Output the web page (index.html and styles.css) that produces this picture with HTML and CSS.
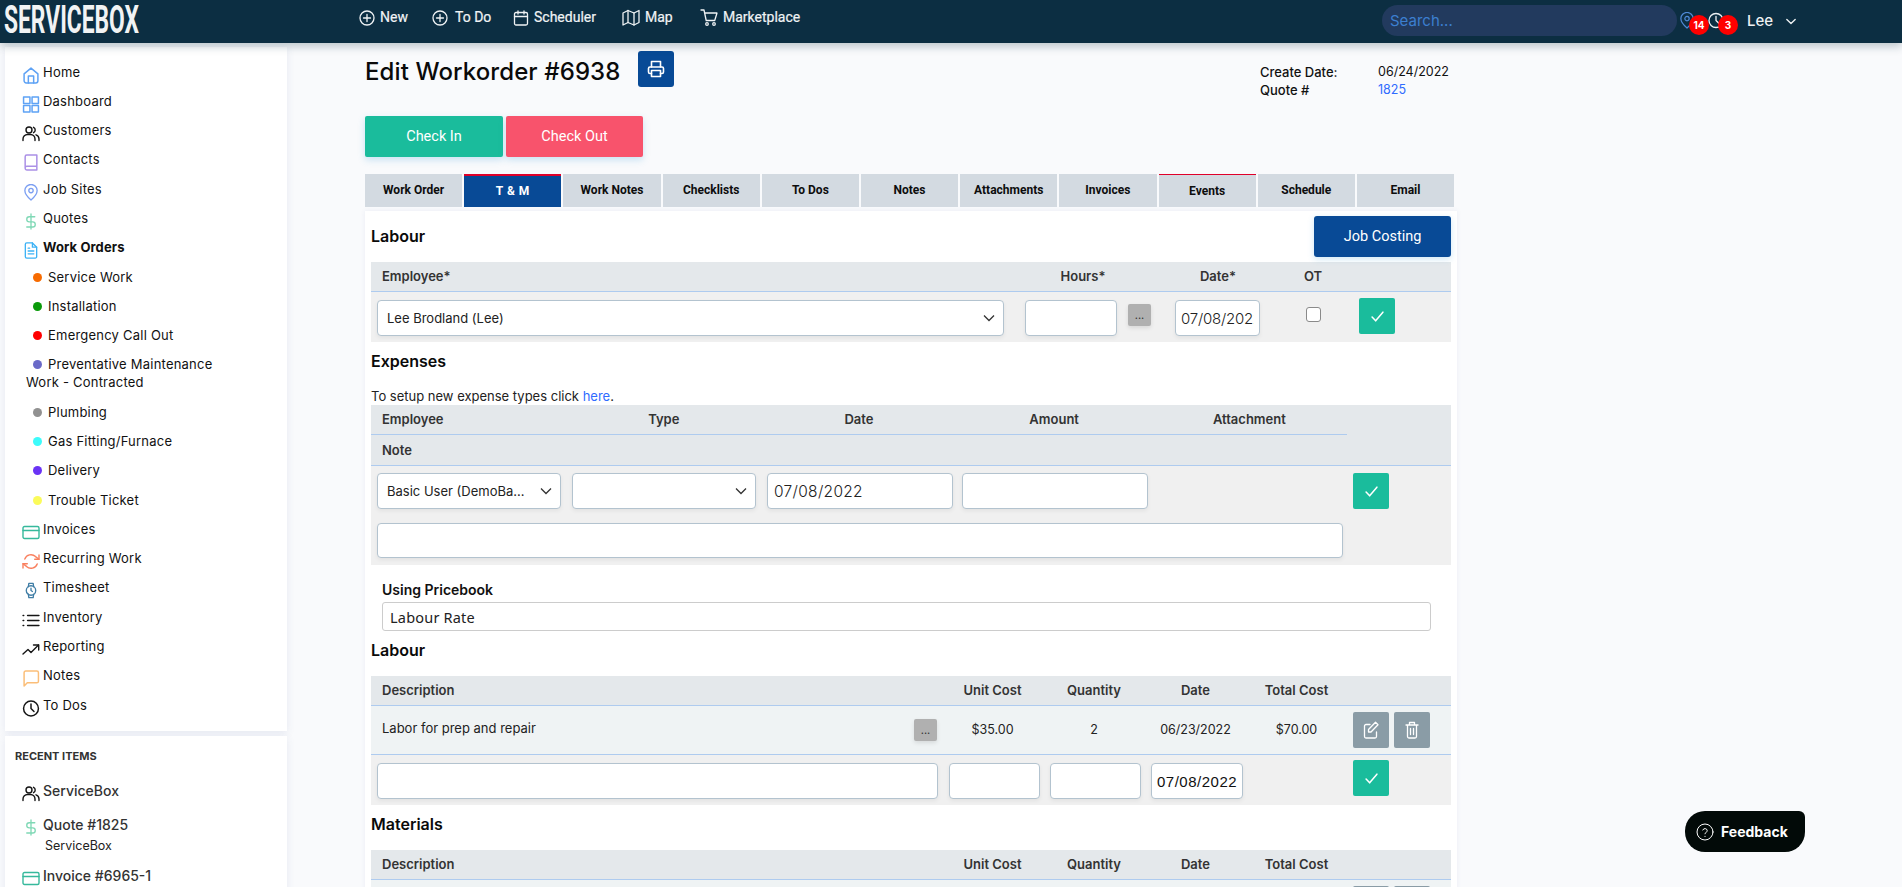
FILE: index.html
```html
<!DOCTYPE html>
<html lang="en">
<head>
<meta charset="utf-8">
<title>Edit Workorder #6938</title>
<link rel="stylesheet" href="styles.css">
</head>
<body>
<svg class="defs" width="0" height="0" aria-hidden="true">
  <symbol id="i-home" viewBox="0 0 16 16"><path d="M1.500 6.500 8 1l6.500 5.500V13a2 2 0 0 1-2 2h-9a2 2 0 0 1-2-2z"/><path d="M5.500 15V8.500h5V15"/></symbol>
  <symbol id="i-grid" viewBox="0 0 16 16"><rect x="1" y="1" width="6" height="6"/><rect x="9" y="1" width="6" height="6"/><rect x="1" y="9" width="6" height="6"/><rect x="9" y="9" width="6" height="6"/></symbol>
  <symbol id="i-users" viewBox="0 0 18 16"><circle cx="7" cy="4.500" r="3"/><path d="M1 15v-1.500A4.500 4.500 0 0 1 5.500 9h3a4.500 4.500 0 0 1 4.500 4.500V15"/><path d="M11.500 1.800a3 3 0 0 1 0 5.400M14 9.300a4.500 4.500 0 0 1 3 4.200V15"/></symbol>
  <symbol id="i-book" viewBox="0 0 16 16"><path d="M2.500 13V2.500A1.500 1.500 0 0 1 4 1h9.500v14H4a1.500 1.500 0 0 1-1.500-1.500V13A1.500 1.500 0 0 1 4 11.500h9.500"/></symbol>
  <symbol id="i-pin" viewBox="0 0 16 18"><path d="M8 17s6.500-5.500 6.500-10A6.500 6.500 0 0 0 1.500 7C1.500 11.500 8 17 8 17z"/><circle cx="8" cy="7" r="2.300"/></symbol>
  <symbol id="i-dollar" viewBox="0 0 12 18"><path d="M6 1v16M10 4H4.200a2.700 2.700 0 0 0 0 5.400h3.600a2.700 2.700 0 0 1 0 5.400H1.500"/></symbol>
  <symbol id="i-file" viewBox="0 0 16 18"><path d="M9.500 1H3.500A1.500 1.500 0 0 0 2 2.500v13A1.500 1.500 0 0 0 3.500 17h9a1.500 1.500 0 0 0 1.500-1.500V5.500z"/><path d="M9.500 1v4.500H14M5 9.500h6M5 12.500h6M5 6.500h1.500"/></symbol>
  <symbol id="i-card" viewBox="0 0 18 14"><rect x="1" y="1" width="16" height="12" rx="1.500"/><path d="M1 5h16"/></symbol>
  <symbol id="i-refresh" viewBox="0 0 18 16"><path d="M17 1.500v4.300h-4.300M1 14.500v-4.300h4.300"/><path d="M2.800 5.500a6.500 6.500 0 0 1 10.700-2.400L17 5.800M1 10.200l3.500 2.700a6.500 6.500 0 0 0 10.700-2.400"/></symbol>
  <symbol id="i-watch" viewBox="0 0 14 18"><circle cx="7" cy="9" r="5"/><path d="M7 6.500V9l1.500 1M4.200 5l.5-3.500h4.600l.5 3.500M4.200 13l.5 3.500h4.600l.5-3.500"/></symbol>
  <symbol id="i-list" viewBox="0 0 16 14"><path d="M5 2.500h10M5 7h10M5 11.500h10M1 2.500h.5M1 7h.5M1 11.500h.5"/></symbol>
  <symbol id="i-trend" viewBox="0 0 18 12"><path d="M1 10.500 6 6l3 3 7.500-7.500"/><path d="M11.500 1.500h5.200v5"/></symbol>
  <symbol id="i-chat" viewBox="0 0 16 16"><path d="M15 10.500A1.500 1.500 0 0 1 13.500 12H4.500L1.500 15V2.500A1.500 1.500 0 0 1 3 1h10.500A1.500 1.500 0 0 1 15 2.500z"/></symbol>
  <symbol id="i-clock" viewBox="0 0 16 16"><circle cx="8" cy="8" r="7"/><path d="M8 3.800V8l2.800 2.800"/></symbol>
  <symbol id="i-plus" viewBox="0 0 16 16"><circle cx="8" cy="8" r="7"/><path d="M8 4.500v7M4.500 8h7"/></symbol>
  <symbol id="i-cal" viewBox="0 0 16 16"><rect x="1.500" y="2.500" width="13" height="12.500" rx="1.500"/><path d="M5 1v3M11 1v3M1.500 6.500h13"/></symbol>
  <symbol id="i-map" viewBox="0 0 18 16"><path d="M1 3.500v12l5-2.500 6 2.500 5-2.500V1l-5 2.500L6 1z"/><path d="M6 1v12M12 3.500v12"/></symbol>
  <symbol id="i-cart" viewBox="0 0 18 17"><path d="M1 1h3l2.200 10.500h8.500L17 4H4.700"/><circle cx="7" cy="15" r="1.300"/><circle cx="14" cy="15" r="1.300"/></symbol>
  <symbol id="i-check" viewBox="0 0 12 10"><path d="M1 5.500 4.300 9 11 1"/></symbol>
  <symbol id="i-printer" viewBox="0 0 18 18"><path d="M4.500 7V1.500h9V7"/><path d="M4.500 13.500H3A1.500 1.500 0 0 1 1.500 12V8.500A1.500 1.500 0 0 1 3 7h12a1.500 1.500 0 0 1 1.500 1.500V12a1.500 1.500 0 0 1-1.500 1.500h-1.500"/><path d="M4.500 10.500h9v6h-9z"/></symbol>
  <symbol id="i-edit" viewBox="0 0 16 18"><path d="M7 3.500H3A1.500 1.500 0 0 0 1.500 5v10.500A1.500 1.500 0 0 0 3 17h9a1.500 1.500 0 0 0 1.500-1.500V11"/><path d="M12.500 1.200 15 3.700 8 11H5.500V8.500z"/></symbol>
  <symbol id="i-trash" viewBox="0 0 14 18"><path d="M1 4h12M4.500 4V1.500h5V4M2.500 4v11.500A1.500 1.500 0 0 0 4 17h6a1.500 1.500 0 0 0 1.500-1.500V4M5.500 7.500v6M8.500 7.500v6"/></symbol>
  <symbol id="i-down" viewBox="0 0 12 8"><path d="M1 1.500 6 6.500l5-5"/></symbol>
</svg>

<header class="topbar">
  <div class="logo"><span class="logo-text">SERVICEBOX</span></div>
  <nav class="topnav">
    <a class="topnav-item"><svg class="topnav-icon"><use href="#i-plus"/></svg>New</a>
    <a class="topnav-item topnav-item--wide"><svg class="topnav-icon"><use href="#i-plus"/></svg>To Do</a>
    <a class="topnav-item"><svg class="topnav-icon"><use href="#i-cal"/></svg>Scheduler</a>
    <a class="topnav-item"><svg class="topnav-icon topnav-icon--big"><use href="#i-map"/></svg>Map</a>
    <a class="topnav-item"><svg class="topnav-icon topnav-icon--big"><use href="#i-cart"/></svg>Marketplace</a>
  </nav>
  <input class="search" type="text" placeholder="Search...">
  <div class="alerts">
    <div class="alert alert--pin"><svg class="alert-icon alert-icon--blue"><use href="#i-pin"/></svg><span class="badge">14</span></div>
    <div class="alert"><svg class="alert-icon"><use href="#i-clock"/></svg><span class="badge">3</span></div>
  </div>
  <div class="user">Lee<svg class="user-chevron"><use href="#i-down"/></svg></div>
</header>

<div class="layout">
  <aside class="sidebar">
    <div class="card card--nav">
      <a class="nav-item"><svg class="ico c-blue"><use href="#i-home"/></svg>Home</a>
      <a class="nav-item"><svg class="ico c-blue"><use href="#i-grid"/></svg>Dashboard</a>
      <a class="nav-item"><svg class="ico c-dark"><use href="#i-users"/></svg>Customers</a>
      <a class="nav-item"><svg class="ico c-purple"><use href="#i-book"/></svg>Contacts</a>
      <a class="nav-item"><svg class="ico c-periwinkle"><use href="#i-pin"/></svg>Job Sites</a>
      <a class="nav-item"><svg class="ico c-mint"><use href="#i-dollar"/></svg>Quotes</a>
      <a class="nav-item nav-item--active"><svg class="ico c-sky"><use href="#i-file"/></svg>Work Orders</a>
      <a class="sub-item"><i class="dot dot--orange"></i>Service Work</a>
      <a class="sub-item"><i class="dot dot--green"></i>Installation</a>
      <a class="sub-item"><i class="dot dot--red"></i>Emergency Call Out</a>
      <a class="sub-item"><i class="dot dot--indigo"></i>Preventative Maintenance Work - Contracted</a>
      <a class="sub-item"><i class="dot dot--grey"></i>Plumbing</a>
      <a class="sub-item"><i class="dot dot--cyan"></i>Gas Fitting/Furnace</a>
      <a class="sub-item"><i class="dot dot--violet"></i>Delivery</a>
      <a class="sub-item"><i class="dot dot--yellow"></i>Trouble Ticket</a>
      <a class="nav-item"><svg class="ico c-teal"><use href="#i-card"/></svg>Invoices</a>
      <a class="nav-item"><svg class="ico c-coral"><use href="#i-refresh"/></svg>Recurring Work</a>
      <a class="nav-item"><svg class="ico c-steel"><use href="#i-watch"/></svg>Timesheet</a>
      <a class="nav-item"><svg class="ico c-dark"><use href="#i-list"/></svg>Inventory</a>
      <a class="nav-item"><svg class="ico c-dark"><use href="#i-trend"/></svg>Reporting</a>
      <a class="nav-item"><svg class="ico c-amber"><use href="#i-chat"/></svg>Notes</a>
      <a class="nav-item"><svg class="ico c-dark"><use href="#i-clock"/></svg>To Dos</a>
    </div>
    <div class="card card--recent">
      <div class="recent-title">RECENT ITEMS</div>
      <a class="recent-item"><svg class="ico c-dark"><use href="#i-users"/></svg>ServiceBox</a>
      <a class="recent-item"><svg class="ico c-mint"><use href="#i-dollar"/></svg>Quote #1825</a>
      <div class="recent-sub">ServiceBox</div>
      <a class="recent-item"><svg class="ico c-teal"><use href="#i-card"/></svg>Invoice #6965-1</a>
    </div>
  </aside>

  <main class="main">
    <div class="page-head">
      <h1 class="page-title">Edit Workorder #6938</h1>
      <button class="btn-print" type="button"><svg class="print-icon"><use href="#i-printer"/></svg></button>
      <dl class="meta">
        <dt>Create Date:</dt><dd>06/24/2022</dd>
        <dt>Quote #</dt><dd><a class="link">1825</a></dd>
      </dl>
    </div>

    <div class="checks">
      <button class="btn-check btn-check--in" type="button">Check In</button>
      <button class="btn-check btn-check--out" type="button">Check Out</button>
    </div>

    <div class="tabs">
      <a class="tab">Work Order</a>
      <a class="tab tab--active">T &amp; M</a>
      <a class="tab">Work Notes</a>
      <a class="tab">Checklists</a>
      <a class="tab">To Dos</a>
      <a class="tab">Notes</a>
      <a class="tab">Attachments</a>
      <a class="tab">Invoices</a>
      <a class="tab tab--flag">Events</a>
      <a class="tab">Schedule</a>
      <a class="tab">Email</a>
    </div>

    <section class="panel">
      <div class="panel-top">
        <h2 class="section-title">Labour</h2>
        <button class="btn-costing" type="button">Job Costing</button>
      </div>

      <div class="grid-time thead">
        <div class="th th--left">Employee*</div>
        <div class="th">Hours*</div>
        <div class="th">Date*</div>
        <div class="th">OT</div>
        <div></div>
      </div>
      <div class="grid-time entry entry--time">
        <div><select class="field select select--employee"><option>Lee Brodland (Lee)</option></select></div>
        <div class="hours-cell"><input class="field field--hours" type="text"><button class="btn-dots" type="button">...</button></div>
        <div><input class="field field--date-sm" type="text" value="07/08/2022"></div>
        <div><input class="ot" type="checkbox"></div>
        <div><button class="btn-ok btn-ok--time" type="button"><svg class="ok-icon"><use href="#i-check"/></svg></button></div>
      </div>

      <h2 class="section-title">Expenses</h2>
      <p class="intro">To setup new expense types click <a class="link">here</a>.</p>
      <div class="exp-head">
        <div class="grid-exp exp-head-row">
          <div class="th th--left">Employee</div>
          <div class="th">Type</div>
          <div class="th">Date</div>
          <div class="th">Amount</div>
          <div class="th">Attachment</div>
        </div>
        <div class="th th--left exp-note">Note</div>
      </div>
      <div class="exp-entry">
        <div class="exp-fields">
          <div class="exp-line">
            <select class="field select select--basic"><option>Basic User (DemoBasicUser)</option></select>
            <select class="field select select--type"><option></option></select>
            <input class="field field--date" type="text" value="07/08/2022">
            <input class="field field--amount" type="text">
          </div>
          <input class="field field--note" type="text">
        </div>
        <button class="btn-ok" type="button"><svg class="ok-icon"><use href="#i-check"/></svg></button>
      </div>

      <div class="pricebook">
        <label class="pricebook-label">Using Pricebook</label>
        <input class="pricebook-input" type="text" value="Labour Rate">
      </div>

      <h2 class="section-title section-title--gap">Labour</h2>
      <div class="grid-cost thead">
        <div class="th th--left">Description</div>
        <div class="th">Unit Cost</div>
        <div class="th">Quantity</div>
        <div class="th">Date</div>
        <div class="th">Total Cost</div>
        <div></div>
      </div>
      <div class="grid-cost trow">
        <div class="desc"><span class="desc-text">Labor for prep and repair</span><button class="btn-dots btn-dots--row" type="button">...</button></div>
        <div class="td">$35.00</div>
        <div class="td">2</div>
        <div class="td">06/23/2022</div>
        <div class="td">$70.00</div>
        <div class="row-actions">
          <button class="btn-act" type="button"><svg class="act-icon"><use href="#i-edit"/></svg></button>
          <button class="btn-act" type="button"><svg class="act-icon"><use href="#i-trash"/></svg></button>
        </div>
      </div>
      <div class="cost-entry">
        <input class="field field--desc" type="text">
        <input class="field field--num" type="text">
        <input class="field field--num" type="text">
        <input class="field field--date-lg" type="text" value="07/08/2022">
        <button class="btn-ok btn-ok--cost" type="button"><svg class="ok-icon"><use href="#i-check"/></svg></button>
      </div>

      <h2 class="section-title section-title--gap">Materials</h2>
      <div class="grid-cost thead">
        <div class="th th--left">Description</div>
        <div class="th">Unit Cost</div>
        <div class="th">Quantity</div>
        <div class="th">Date</div>
        <div class="th">Total Cost</div>
        <div></div>
      </div>
      <div class="grid-cost trow">
        <div class="desc"></div>
        <div class="td"></div>
        <div class="td"></div>
        <div class="td"></div>
        <div class="td"></div>
        <div class="row-actions">
          <button class="btn-act" type="button"><svg class="act-icon"><use href="#i-edit"/></svg></button>
          <button class="btn-act" type="button"><svg class="act-icon"><use href="#i-trash"/></svg></button>
        </div>
      </div>
    </section>
  </main>
</div>

<button class="feedback" type="button">
  <svg class="feedback-icon" viewBox="0 0 18 18"><circle cx="9" cy="9" r="8"/><path d="M6.800 7a2.300 2.300 0 0 1 4.400.6c0 1.500-2.200 2-2.200 3.200M9 13.300v.2"/></svg>Feedback
</button>
</body>
</html>
```
FILE: styles.css
```css
* { box-sizing: border-box; }
html, body { margin: 0; height: 887px; overflow: hidden; }
body { background: #f9fafc; font-family: "Inter", "Liberation Sans", sans-serif; font-size: 13px; color: #111; }
.defs { position: absolute; }
svg { fill: none; stroke: currentColor; stroke-width: 1.3; stroke-linecap: round; stroke-linejoin: round; }
button { font-family: inherit; border: 0; padding: 0; cursor: pointer; }
h1, h2, p, dl, dd { margin: 0; }
.link { color: #2f6bff; }

/* top bar */
.topbar { position: relative; z-index: 5; height: 43px; background: #0c2e42; display: flex; align-items: flex-start; box-shadow: 0 3px 9px rgba(12, 46, 66, .28); color: #fff; }
.logo { width: 359px; height: 43px; padding-left: 4px; }
.logo-text { display: inline-block; font: 700 38px/40px "Roboto", sans-serif; transform: scaleX(.6); transform-origin: left top; color: #f1f3f4; white-space: nowrap; }
.topnav { width: 1023px; display: grid; grid-template-columns: 73px 81px 109px 78px auto; font: 400 14px/35px "Roboto", sans-serif; color: #f0f3f5; -webkit-text-stroke: .2px #f0f3f5; }
.topnav-item { display: flex; align-items: center; gap: 5px; }
.topnav-item--wide { gap: 7px; }
.topnav-icon { width: 16px; height: 16px; }
.topnav-icon--big { width: 18px; height: 17px; }
.search { width: 295px; height: 31px; margin-top: 5px; padding: 0 8px; border: 0; border-radius: 16px; background: #223a5e; font: 15px "Inter", sans-serif; color: #fff; }
.search::placeholder { color: #3c7fd0; }
.alerts { display: flex; margin-left: 2px; margin-top: 12px; gap: 15px; }
.alert { position: relative; width: 14px; height: 18px; }
.alert-icon { width: 16px; height: 17px; display: block; color: #eef2f5; }
.alert-icon--blue { color: #4f8ad6; }
.badge { position: absolute; left: 10px; top: 3px; width: 20px; height: 20px; border-radius: 50%; background: #f00; color: #fff; font: 700 10px/20px "Inter", sans-serif; text-align: center; }
.user { margin-left: 25px; margin-top: 11px; font: 500 15px/20px "Inter", sans-serif; color: #eef1f3; display: flex; align-items: center; gap: 13px; }
.user-chevron { width: 10px; height: 7px; stroke-width: 1.6; }

/* layout */
.layout { display: flex; align-items: flex-start; padding-left: 5px; }
.sidebar { width: 282px; padding-top: 4px; flex: none; }
.card { background: #fff; box-shadow: 0 2px 8px rgba(60, 80, 150, .1); margin-bottom: 5px; }
.card--nav { padding: 10px 8px 12px 17px; height: 684px; }
.nav-item, .sub-item { color: #111; line-height: 18px; padding: 5.65px 0; font-size: 13px; letter-spacing: .22px; }
.nav-item { display: flex; align-items: flex-start; }
.nav-item--active { font-weight: 700; letter-spacing: .1px; }
.ico { width: 18px; height: 17px; flex: none; margin: 4px 3px -4px 0; stroke-width: 1.4; }
.c-blue { color: #5ea2f5; }
.c-dark { color: #151515; }
.c-purple { color: #ab90e6; }
.c-periwinkle { color: #7c9ff2; }
.c-mint { color: #7fd8b5; }
.c-sky { color: #3db2f5; }
.c-teal { color: #36b99c; }
.c-coral { color: #f9805f; }
.c-steel { color: #3f7da5; }
.c-amber { color: #fbbe78; }
.sub-item { display: block; width: 226px; padding-left: 4px; text-indent: 7px; }
.dot { display: inline-block; width: 9px; height: 9px; border-radius: 50%; margin-right: 6px; }
.dot--orange { background: #f76b00; }
.dot--green { background: #0a9a0a; }
.dot--red { background: #f00; }
.dot--indigo { background: #6a6ac8; }
.dot--grey { background: #919191; }
.dot--cyan { background: #3dfbfb; }
.dot--violet { background: #6a33f5; }
.dot--yellow { background: #fbfb5a; }
.card--recent { padding: 13px 8px 0 10px; height: 200px; }
.recent-title { font-size: 11px; line-height: 14px; font-weight: 700; color: #333; margin-bottom: 18px; }
.recent-item { display: flex; align-items: flex-start; padding-left: 7px; font-size: 14px; font-weight: 500; line-height: 20px; color: #333; margin-bottom: 14px; }
.recent-sub { padding-left: 30px; margin-top: -12px; margin-bottom: 11px; font-size: 12.5px; line-height: 18px; color: #222; }

/* main */
.main { width: 1092px; margin-left: 78px; padding-top: 8px; flex: none; }
.page-head { display: flex; align-items: flex-start; width: 1089px; height: 36px; }
.page-title { font-size: 24px; line-height: 42px; font-weight: 500; width: 273px; padding-left: 0; color: #0a0a0a; white-space: nowrap; letter-spacing: .1px; }
.btn-print { width: 36px; height: 36px; border-radius: 3px; background: #084a96; color: #fff; display: flex; align-items: center; justify-content: center; }
.print-icon { width: 18px; height: 18px; stroke-width: 1.6; }
.meta { margin-left: auto; margin-top: 12px; width: 194px; display: grid; grid-template-columns: 118px 1fr; font-size: 13px; line-height: 18px; color: #111; font-weight: 500; }
.meta dd { font-weight: 400; font-size: 12.5px; }
.checks { display: flex; gap: 3px; margin-top: 29px; }
.btn-check { height: 41px; color: #fff; font: 400 14.5px "Roboto", sans-serif; border-radius: 2px; box-shadow: 0 3px 7px rgba(60, 160, 220, .25); }
.btn-check--in { width: 138px; background: #1abc9c; }
.btn-check--out { width: 137px; background: #f8536c; }
.tabs { display: flex; gap: 2px; margin-top: 17px; width: 1089px; }
.tab { flex: 1; height: 33px; background: #d3dae1; font: 700 12px/32px "Roboto", sans-serif; text-align: center; color: #0d0d0d; }
.tab--active { background: #084a96; color: #fff; border-top: 2px solid #e0002a; line-height: 31px; letter-spacing: .5px; }
.tab--flag { border-top: 1px solid #e0002a; line-height: 33px; }

/* panel */
.panel { margin-top: 4px; background: #fff; padding: 0 6px; box-shadow: 0 0 5px rgba(60, 80, 150, .08); height: 760px; }
.panel-top { display: flex; justify-content: space-between; height: 51px; }
.section-title { font-size: 16px; line-height: 38px; font-weight: 600; color: #0a0a0a; height: 38px; }
.panel-top .section-title { padding-top: 6px; }
.section-title--gap { margin-bottom: 7px; }
.btn-costing { width: 137px; height: 41px; margin-top: 5px; background: #084a96; color: #fff; font: 400 14.5px "Roboto", sans-serif; border-radius: 3px; box-shadow: 0 2px 6px rgba(60, 160, 220, .25); }
.thead { background: #e4e8eb; height: 30px; border-bottom: 1px solid #aecbef; }
.th { font-size: 13px; font-weight: 600; line-height: 29px; color: #333; text-align: center; }
.th--left { text-align: left; padding-left: 11px; }
.grid-time { display: grid; grid-template-columns: 644px 136px 134px 56px 1fr; }
.entry--time { height: 50px; background: #f0f0f0; padding-top: 6px; align-items: start; }
.field { display: block; height: 36px; border: 1px solid #b3c3cf; border-radius: 4px; background: #fff; box-shadow: 0 2px 4px rgba(0, 0, 0, .06); font: 300 15.5px "Inter", sans-serif; color: #222; padding: 0 6px; outline: 0; }
.select { appearance: none; font: 400 13px "Inter", sans-serif; padding: 0 30px 0 9px; text-overflow: ellipsis; background: #fff url("data:image/svg+xml,%3Csvg xmlns='http://www.w3.org/2000/svg' width='12' height='8'%3E%3Cpath d='M1 1.500 6 6.500l5-5' fill='none' stroke='%23333' stroke-width='1.300'/%3E%3C/svg%3E") no-repeat right 8px center; }
.select--employee { width: 627px; margin: 2px 0 0 6px; }
.hours-cell { display: flex; align-items: flex-start; padding-left: 10px; }
.field--hours { width: 92px; margin-top: 2px; }
.btn-dots { width: 23px; height: 22px; margin: 6px 0 0 11px; background: #b0b0b0; border-radius: 2px; color: #333; font-size: 11px; line-height: 22px; box-shadow: 0 2px 4px rgba(0, 0, 0, .1); }
.field--date-sm { width: 85px; margin: 2px 0 0 24px; padding: 0 5px; font-size: 15px; letter-spacing: -.2px; }
.ot { appearance: none; display: block; width: 15px; height: 15px; margin: 9px 0 0 21px; background: #fff; border: 1px solid #8a8a8a; border-radius: 3px; }
.btn-ok { width: 36px; height: 36px; border-radius: 2px; background: #1abc9c; color: #fff; display: flex; align-items: center; justify-content: center; flex: none; }
.btn-ok--time { margin-left: 18px; }
.ok-icon { width: 13px; height: 11px; stroke-width: 1.4; }

.intro { height: 25px; padding-top: 7px; line-height: 18px; font-size: 13px; color: #222; }
.exp-head { background: #e4e8eb; height: 61px; border-bottom: 1px solid #aecbef; }
.grid-exp { display: grid; grid-template-columns: repeat(5, 195.2px); width: 976px; }
.exp-head-row { height: 30px; border-bottom: 1px solid #aecbef; }
.exp-note { line-height: 30px; }
.exp-entry { display: flex; height: 99px; background: #f0f0f0; padding: 7px 0 0 6px; align-items: flex-start; }
.exp-fields { width: 970px; margin-right: 6px; }
.exp-line { display: flex; }
.select--basic { width: 184px; margin-right: 11px; }
.select--type { width: 184px; margin-right: 11px; }
.field--date { width: 186px; margin-right: 9px; letter-spacing: .3px; }
.field--amount { width: 186px; }
.field--note { width: 966px; height: 35px; margin-top: 14px; }

.pricebook { padding: 16px 20px 0 11px; }
.pricebook-label { display: block; font-size: 14px; font-weight: 600; line-height: 18px; color: #111; }
.pricebook-input { display: block; width: 100%; height: 29px; margin-top: 3px; padding: 0 7px; border: 1px solid #ccc; border-radius: 3px; font: 14.5px "Noto Sans", sans-serif; letter-spacing: .2px; color: #222; background: #fff; outline: 0; }

.grid-cost { display: grid; grid-template-columns: 571px 101px 102px 101px 101px 1fr; }
.trow { height: 49px; background: #eff3f4; border-bottom: 1px solid #aecbef; align-items: start; }
.desc { display: flex; justify-content: space-between; padding: 13px 5px 0 11px; }
.desc-text { font-size: 13px; line-height: 18px; color: #222; }
.btn-dots--row { margin: 0; }
.td { text-align: center; font-size: 12.5px; line-height: 18px; color: #222; padding-top: 15px; }
.row-actions { display: flex; gap: 5px; padding: 6px 0 0 6px; }
.btn-act { width: 36px; height: 36px; border-radius: 2px; background: #8a9ca6; color: #fff; display: flex; align-items: center; justify-content: center; }
.act-icon { width: 16px; height: 18px; stroke-width: 1.3; }
.cost-entry { display: flex; height: 50px; background: #f0f0f0; padding: 8px 0 0 6px; align-items: flex-start; }
.field--desc { width: 561px; margin-right: 11px; }
.field--num { width: 91px; margin-right: 10px; }
.field--date-lg { width: 92px; margin-right: 110px; padding: 0 5px; font: 400 15px "Liberation Sans", sans-serif; letter-spacing: .5px; color: #111; }
.btn-ok--cost { margin-top: -3px; }

/* feedback */
.feedback { position: fixed; left: 1685px; top: 811px; z-index: 9; width: 120px; height: 41px; padding-left: 11px; border-radius: 20px 6px 20px 20px; background: #020a08; color: #fff; font: 700 14px "Inter", sans-serif; display: flex; align-items: center; gap: 7px; }
.feedback-icon { width: 18px; height: 18px; stroke-width: 1; }
```
